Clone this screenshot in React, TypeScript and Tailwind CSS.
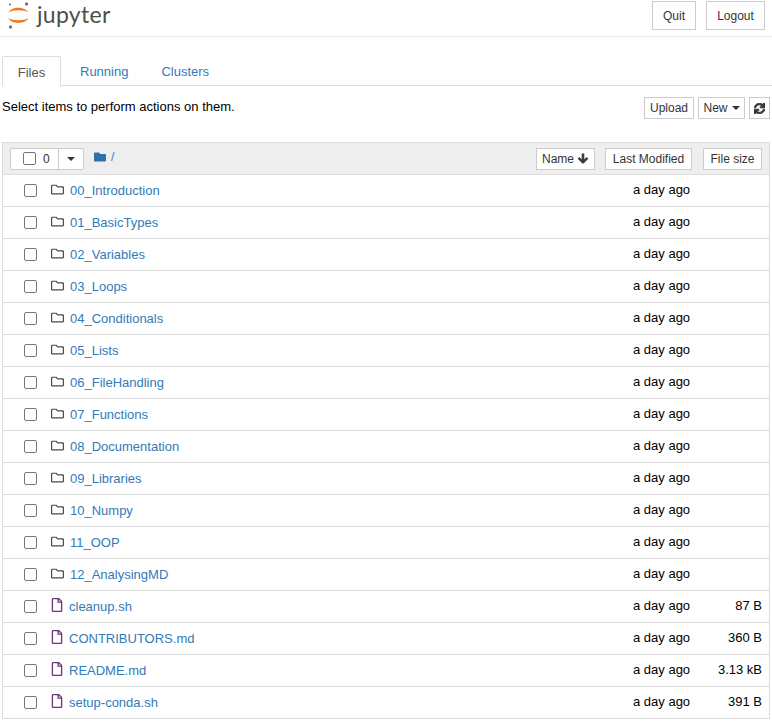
import { FaArrowDown, FaFolder, FaRegFile, FaRegFolder, FaSync } from 'react-icons/fa';

const items = [
  { name: '00_Introduction', kind: 'dir' },
  { name: '01_BasicTypes', kind: 'dir' },
  { name: '02_Variables', kind: 'dir' },
  { name: '03_Loops', kind: 'dir' },
  { name: '04_Conditionals', kind: 'dir' },
  { name: '05_Lists', kind: 'dir' },
  { name: '06_FileHandling', kind: 'dir' },
  { name: '07_Functions', kind: 'dir' },
  { name: '08_Documentation', kind: 'dir' },
  { name: '09_Libraries', kind: 'dir' },
  { name: '10_Numpy', kind: 'dir' },
  { name: '11_OOP', kind: 'dir' },
  { name: '12_AnalysingMD', kind: 'dir' },
  { name: 'cleanup.sh', kind: 'file', size: '87 B' },
  { name: 'CONTRIBUTORS.md', kind: 'file', size: '360 B' },
  { name: 'README.md', kind: 'file', size: '3.13 kB' },
  { name: 'setup-conda.sh', kind: 'file', size: '391 B' },
];

function Logo() {
  return (
    <svg width="24" height="30" viewBox="0 0 24 30" className="shrink-0">
      <path d="M0.5 12.5C3 6 17 6 20.5 12.5C17 9.5 4 9.5 0.5 12.5Z" fill="#f37726" />
      <path d="M0.5 18C3 24.5 17 24.5 20.5 18C17 21 4 21 0.5 18Z" fill="#f37726" />
      <circle cx="18.5" cy="4" r="1.7" fill="#767677" />
      <circle cx="2" cy="4.5" r="1.1" fill="#767677" />
      <circle cx="2.5" cy="27" r="1.7" fill="#767677" />
    </svg>
  );
}

function Checkbox() {
  return <span className="block h-[13px] w-[13px] rounded-[2px] border border-[#767676] bg-white" />;
}

function Button({ children, className = '' }: { children: React.ReactNode; className?: string }) {
  return (
    <button
      className={`flex h-[22px] items-center justify-center border border-[#cccccc] bg-white text-xs text-[#333333] ${className}`}
    >
      {children}
    </button>
  );
}

function Row({ name, kind, size }: { name: string; kind: string; size?: string }) {
  return (
    <div className="flex h-8 items-center border-t border-[#dddddd] pr-[7px]">
      <div className="ml-[21px] flex w-[27px] shrink-0">
        <Checkbox />
      </div>
      {kind === 'dir' ? (
        <FaRegFolder className="mr-[6px] h-[13px] w-[13px] shrink-0 -translate-y-px text-[#4a4a4a]" />
      ) : (
        <FaRegFile className="mr-[6px] h-[14px] w-[12px] shrink-0 -translate-y-[2px] text-[#6a3a7a]" />
      )}
      <a className="flex-1 text-[13px] text-[#337ab7]">{name}</a>
      <span className="w-[57px] -translate-y-px whitespace-nowrap text-[13px] text-black">a day ago</span>
      <span className="w-[72px] -translate-y-px text-right text-[13px] text-black">{size}</span>
    </div>
  );
}

export default function App() {
  return (
    <div className="h-[725px] w-[772px] overflow-hidden bg-white font-['Liberation_Sans',sans-serif]">
      <header className="flex h-[37px] items-start justify-between border-b border-[#e7e7e7]">
        <div className="flex items-start gap-[5px] pl-[8px]">
          <Logo />
          <span className="font-['Lato',sans-serif] text-[23px] leading-[28px] tracking-[0.3px] text-[#4e4e4e]">
            jupyter
          </span>
        </div>
        <div className="mr-[7px] mt-[1px] flex gap-[10px]">
          <button className="h-[29px] w-[44px] border border-[#cccccc] text-xs text-[#333333]">Quit</button>
          <button className="h-[29px] w-[59px] border border-[#cccccc] text-xs text-[#333333]">Logout</button>
        </div>
      </header>

      <nav className="ml-[2px] mt-[19px] flex h-[30px] border-b border-[#dddddd] text-[13px] text-[#337ab7]">
        <a className="h-[30px] w-[59px] rounded-t-[2px] border border-b-0 border-[#dddddd] bg-white pt-[6px] text-center text-[#555555]">
          Files
        </a>
        <a className="ml-[19px] pt-[6px]">Running</a>
        <a className="ml-[33px] pt-[6px]">Clusters</a>
      </nav>

      <div className="mx-[2px] mt-[5px] flex h-[51px] justify-between">
        <p className="mt-[7px] text-[13px] leading-[18px] text-black">
          Select items to perform actions on them.
        </p>
        <div className="mt-[6px] flex gap-[4px]">
          <Button className="w-[50px]">Upload</Button>
          <Button className="w-[47px] gap-[4px]">
            New
            <span className="h-0 w-0 border-x-[4px] border-t-[4px] border-x-transparent border-t-[#333333]" />
          </Button>
          <Button className="w-[21px]">
            <FaSync className="h-[11px] w-[11px] stroke-[40]" />
          </Button>
        </div>
      </div>

      <section className="ml-[2px] w-[768px] border border-t-0 border-[#dddddd]">
        <div className="flex h-[32px] items-center border-t border-[#dddddd] bg-[#eeeeee] pl-[7px] pr-[7px]">
          <div className="flex h-[22px] w-[74px] items-center rounded-[2px] border border-[#cccccc] bg-white">
            <span className="ml-[12px] mr-[7px]">
              <Checkbox />
            </span>
            <span className="text-xs text-[#333333]">0</span>
            <span className="ml-auto flex h-full w-[25px] items-center justify-center border-l border-[#cccccc]">
              <span className="h-0 w-0 border-x-[4px] border-t-[4px] border-x-transparent border-t-[#333333]" />
            </span>
          </div>
          <FaFolder className="ml-[10px] h-[12px] w-[12px] -translate-y-[2px] text-[#2f6fad]" />
          <span className="ml-[5px] -translate-y-[2px] text-xs text-[#337ab7]">/</span>
          <div className="ml-auto flex">
            <Button className="w-[59px] gap-[3px]">
              Name
              <FaArrowDown className="h-[11px] w-[12px] stroke-[40]" />
            </Button>
            <Button className="ml-[10px] w-[87px]">Last Modified</Button>
            <Button className="ml-[11px] w-[59px]">File size</Button>
          </div>
        </div>
        {items.map((item) => (
          <Row key={item.name} {...item} />
        ))}
      </section>
    </div>
  );
}
